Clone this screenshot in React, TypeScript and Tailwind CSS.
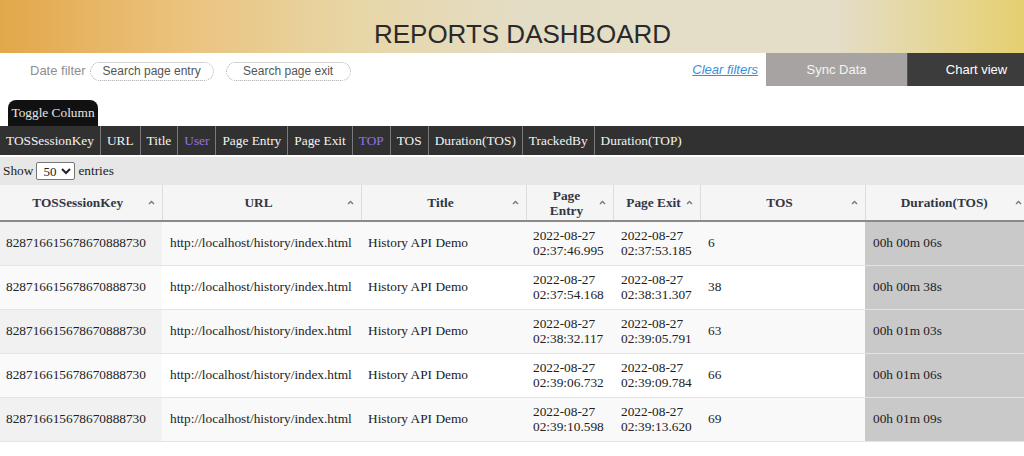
import React from 'react';

type Row = {
  key: string;
  url: string;
  title: string;
  entry: [string, string];
  exit: [string, string];
  tos: string;
  duration: string;
};

const rows: Row[] = [
  { key: '828716615678670888730', url: 'http://localhost/history/index.html', title: 'History API Demo', entry: ['2022-08-27', '02:37:46.995'], exit: ['2022-08-27', '02:37:53.185'], tos: '6', duration: '00h 00m 06s' },
  { key: '828716615678670888730', url: 'http://localhost/history/index.html', title: 'History API Demo', entry: ['2022-08-27', '02:37:54.168'], exit: ['2022-08-27', '02:38:31.307'], tos: '38', duration: '00h 00m 38s' },
  { key: '828716615678670888730', url: 'http://localhost/history/index.html', title: 'History API Demo', entry: ['2022-08-27', '02:38:32.117'], exit: ['2022-08-27', '02:39:05.791'], tos: '63', duration: '00h 01m 03s' },
  { key: '828716615678670888730', url: 'http://localhost/history/index.html', title: 'History API Demo', entry: ['2022-08-27', '02:39:06.732'], exit: ['2022-08-27', '02:39:09.784'], tos: '66', duration: '00h 01m 06s' },
  { key: '828716615678670888730', url: 'http://localhost/history/index.html', title: 'History API Demo', entry: ['2022-08-27', '02:39:10.598'], exit: ['2022-08-27', '02:39:13.620'], tos: '69', duration: '00h 01m 09s' },
];

const toggles = [
  { label: 'TOSSessionKey', off: false },
  { label: 'URL', off: false },
  { label: 'Title', off: false },
  { label: 'User', off: true },
  { label: 'Page Entry', off: false },
  { label: 'Page Exit', off: false },
  { label: 'TOP', off: true },
  { label: 'TOS', off: false },
  { label: 'Duration(TOS)', off: false },
  { label: 'TrackedBy', off: false },
  { label: 'Duration(TOP)', off: false },
];

const columns = [
  { label: 'TOSSessionKey', width: 162 },
  { label: 'URL', width: 199 },
  { label: 'Title', width: 165 },
  { label: 'Page Entry', width: 87 },
  { label: 'Page Exit', width: 87 },
  { label: 'TOS', width: 165 },
  { label: 'Duration(TOS)', width: 164 },
];

const SortArrow: React.FC = () => (
  <svg width="7" height="5" viewBox="0 0 7 5" className="shrink-0" aria-hidden="true">
    <path d="M1 4 L3.5 1.5 L6 4" fill="none" stroke="#777" strokeWidth="1.4" />
  </svg>
);

const DateCell: React.FC<{ value: [string, string] }> = ({ value }) => (
  <div className="leading-[15px]">
    <div>{value[0]}</div>
    <div>{value[1]}</div>
  </div>
);

export default function App() {
  return (
    <div className="h-[456px] w-full overflow-hidden bg-white">
      <div className="w-[1045px]">
        {/* banner */}
        <div className="h-[53px] bg-[linear-gradient(to_right,#e2a74a_0%,#ebc27c_17%,#e7d6a6_34%,#e4ddc6_50%,#e4ddc8_80%,#e6d58c_92%,#e5cd66_100%)] pt-[19px] text-center font-['Liberation_Sans',Arial,sans-serif] text-[26px] leading-[30px] text-[#2a2a2a]">
          REPORTS DASHBOARD
        </div>

        {/* filters */}
        <div className="flex h-[33px] items-center font-['Liberation_Sans',Arial,sans-serif]">
          <span className="ml-[30px] mt-[2px] text-[13px] text-[#8f8f8f]">Date filter</span>
          <input
            placeholder="Search page entry"
            className="ml-[4px] mt-[3px] h-[19px] w-[124px] rounded-full border border-dotted border-[#aaa] text-center text-[12px] outline-none placeholder:text-[#555]"
          />
          <input
            placeholder="Search page exit"
            className="ml-[12px] mt-[3px] h-[19px] w-[125px] rounded-full border border-dotted border-[#aaa] text-center text-[12px] outline-none placeholder:text-[#555]"
          />
          <div className="flex-1" />
          <a href="#" className="mr-[8px] text-[13px] italic text-[#3b8fd8] underline">
            Clear filters
          </a>
          <button className="h-[33px] w-[141px] bg-[#a7a3a2] text-[13px] text-[#f4f4f4]">Sync Data</button>
          <button className="h-[33px] w-[138px] border-l border-[#555] bg-[#3c3c3c] text-[13px] text-white">
            Chart view
          </button>
        </div>

        {/* toggle column */}
        <div className="font-['Liberation_Serif','Times_New_Roman',serif] text-[13.33px]">
          <div className="ml-[8px] mt-[14px] flex h-[26px] w-[90px] items-center justify-center rounded-t-[8px] bg-[#111] text-[#e6e6e6]">
            Toggle Column
          </div>
          <div className="flex h-[29px] items-stretch bg-[#313131]">
            {toggles.map((t, i) => (
              <div
                key={t.label}
                className={`flex items-center px-[6px] ${i < toggles.length - 1 ? 'border-r border-[#7a7a7a]' : ''} ${
                  t.off ? 'text-[#9171e8]' : 'text-[#f3f3f3]'
                }`}
              >
                {t.label}
              </div>
            ))}
          </div>

          {/* length */}
          <div className="mt-[2px] flex h-[28px] items-center bg-[#e7e7e7] pl-[3px] text-[#222]">
            Show
            <select defaultValue="50" className="mx-[3px] h-[18px] w-[39px] rounded-[2px] border border-[#767676] bg-white pl-[2px] text-[13px]">
              <option value="10">10</option>
              <option value="25">25</option>
              <option value="50">50</option>
              <option value="100">100</option>
            </select>
            entries
          </div>

          {/* table */}
          <table className="w-[1029px] table-fixed border-collapse text-[13.33px] text-[#222]">
            <colgroup>
              {columns.map((c) => (
                <col key={c.label} style={{ width: c.width }} />
              ))}
            </colgroup>
            <thead>
              <tr className="h-[36px] border-b-2 border-[#8a8a8a] bg-[#f5f5f5]">
                {columns.map((c, i) => (
                  <th
                    key={c.label}
                    className={`p-0 font-bold text-[#333644] ${i < columns.length - 1 ? 'border-r border-[#dcdcdc]' : ''}`}
                  >
                    <div className="flex items-center pl-2 pr-[7px]">
                      <span className={`flex-1 text-center leading-[15px] ${c.label === 'Page Entry' ? 'px-[6px]' : ''}`}>
                        {c.label}
                      </span>
                      <SortArrow />
                    </div>
                  </th>
                ))}
              </tr>
            </thead>
            <tbody>
              {rows.map((r, i) => {
                const odd = i % 2 === 0;
                return (
                  <tr
                    key={i}
                    className={`h-[44px] border-b border-[#e4e4e4] ${odd ? 'bg-[#f9f9f9]' : 'bg-white'}`}
                  >
                    <td className={`pl-[6px] pr-1 ${odd ? 'bg-[#f1f1f1]' : 'bg-[#fafafa]'}`}>{r.key}</td>
                    <td className="px-2">{r.url}</td>
                    <td className="px-[7px]">{r.title}</td>
                    <td className="px-[7px]">
                      <DateCell value={r.entry} />
                    </td>
                    <td className="px-2">
                      <DateCell value={r.exit} />
                    </td>
                    <td className="px-2">{r.tos}</td>
                    <td className="bg-[#c9c9c9] px-2">{r.duration}</td>
                  </tr>
                );
              })}
            </tbody>
          </table>
        </div>
      </div>
    </div>
  );
}
